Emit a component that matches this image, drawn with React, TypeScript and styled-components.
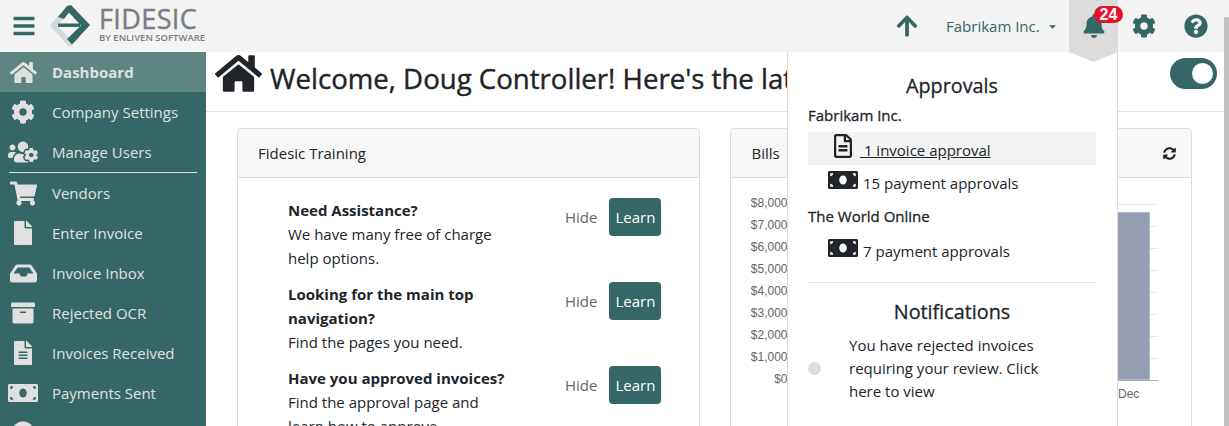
import React from 'react'
import styled, { createGlobalStyle } from 'styled-components'
import {
  FaArchive,
  FaArrowUp,
  FaBars,
  FaBell,
  FaCaretDown,
  FaCircle,
  FaCog,
  FaFile,
  FaFileAlt,
  FaHome,
  FaInbox,
  FaMoneyBill,
  FaQuestionCircle,
  FaRegFileAlt,
  FaShoppingCart,
  FaSyncAlt,
  FaUsersCog,
} from 'react-icons/fa'

const TEAL = '#356767'
const FONT = `'Open Sans', 'Noto Sans', sans-serif`

const navItems = [
  { label: 'Dashboard', icon: FaHome, size: 27, active: true },
  { label: 'Company Settings', icon: FaCog, size: 24 },
  { label: 'Manage Users', icon: FaUsersCog, size: 30, divider: true },
  { label: 'Vendors', icon: FaShoppingCart, size: 27 },
  { label: 'Enter Invoice', icon: FaFile, size: 24 },
  { label: 'Invoice Inbox', icon: FaInbox, size: 27 },
  { label: 'Rejected OCR', icon: FaArchive, size: 24 },
  { label: 'Invoices Received', icon: FaFileAlt, size: 24 },
  { label: 'Payments Sent', icon: FaMoneyBill, size: 30 },
  { label: '', icon: FaCircle, size: 24 },
]

const trainingItems = [
  {
    title: ['Need Assistance?'],
    body: ['We have many free of charge', 'help options.'],
  },
  {
    title: ['Looking for the main top', 'navigation?'],
    body: ['Find the pages you need.'],
  },
  {
    title: ['Have you approved invoices?'],
    body: ['Find the approval page and', 'learn how to approve.'],
  },
]

const yLabels = ['$8,000', '$7,000', '$6,000', '$5,000', '$4,000', '$3,000', '$2,000', '$1,000', '$0']

const Logo = () => (
  <LogoMark viewBox='49 3 43 44'>
    <polygon points='60,13 50,24.5 68,44.5 71,45 80,36 75,32 70,38 57,24.5 64,18' fill='#d5d8d8' />
    <polygon
      points='58,16 67,5 71,4 90,24 72,43.5 67,38 81,24.5 69,11.5 64,18'
      fill={TEAL}
    />
    <rect x='58' y='22.5' width='22' height='3.5' fill={TEAL} />
  </LogoMark>
)

const BillsChart = () => (
  <ChartSvg viewBox='0 0 460 250'>
    {yLabels.map((label, i) => (
      <g key={label}>
        <text x='56.5' y={29 + i * 22} textAnchor='end' fontSize='12' fill='#666'>
          {label}
        </text>
        <line
          x1='60'
          x2='427'
          y1={26.5 + i * 22}
          y2={26.5 + i * 22}
          stroke={i === 8 ? '#aaa' : '#e6e6e6'}
        />
      </g>
    ))}
    <rect x='350.5' y='34.5' width='68' height='167' fill='#949eb0' stroke='#b4bbc8' />
    <text x='387' y='220' fontSize='12' fill='#666'>
      Dec
    </text>
  </ChartSvg>
)

export default function App() {
  return (
    <>
      <GlobalStyles />
      <Page>
        <Header>
          <Burger>
            <FaBars size={24} />
          </Burger>
          <Logo />
          <Brand>
            <BrandName>FIDESIC</BrandName>
            <BrandSub>BY ENLIVEN SOFTWARE</BrandSub>
          </Brand>
          <HeaderRight>
            <UpArrow>
              <FaArrowUp size={24} />
            </UpArrow>
            <CompanyPicker>
              Fabrikam Inc.
              <FaCaretDown size={11} />
            </CompanyPicker>
            <BellTab>
              <FaBell size={24} />
              <Badge>24</Badge>
              <BellPointer />
              <Dropdown>
                <DropdownTitle>Approvals</DropdownTitle>
                <CompanyName>Fabrikam Inc.</CompanyName>
                <ApprovalLink>
                  <FaRegFileAlt size={24} />
                  <u>&nbsp;1 invoice approval</u>
                </ApprovalLink>
                <ApprovalRow>
                  <FaMoneyBill size={30} />
                  15 payment approvals
                </ApprovalRow>
                <CompanyName $spaced>The World Online</CompanyName>
                <ApprovalRow $spaced>
                  <FaMoneyBill size={30} />
                  7 payment approvals
                </ApprovalRow>
                <Rule />
                <DropdownTitle>Notifications</DropdownTitle>
                <Notice>
                  <NoticeDot />
                  <NoticeText>
                    You have rejected invoices
                    <br />
                    requiring your review. Click
                    <br />
                    here to view
                  </NoticeText>
                </Notice>
              </Dropdown>
            </BellTab>
            <HeaderIcon>
              <FaCog size={24} />
            </HeaderIcon>
            <HeaderIcon>
              <FaQuestionCircle size={24} />
            </HeaderIcon>
          </HeaderRight>
        </Header>
        <Body>
          <Sidebar>
            {navItems.map((item) => (
              <React.Fragment key={item.label}>
                <NavItem $active={item.active}>
                  <NavIcon>
                    <item.icon size={item.size} />
                  </NavIcon>
                  {item.label}
                </NavItem>
                {item.divider && <NavDivider />}
              </React.Fragment>
            ))}
          </Sidebar>
          <Main>
            <TitleBar>
              <Title>
                <FaHome size={47} />
                <h1>Welcome, Doug Controller! Here's the latest</h1>
              </Title>
              <Toggle />
            </TitleBar>
            <Cards>
              <Card>
                <CardHeader>Fidesic Training</CardHeader>
                <TrainingList>
                  {trainingItems.map((item) => (
                    <TrainingRow key={item.title[0]}>
                      <TrainingText>
                        {item.title.map((line) => (
                          <strong key={line}>{line}</strong>
                        ))}
                        {item.body.map((line) => (
                          <span key={line}>{line}</span>
                        ))}
                      </TrainingText>
                      <HideLink>Hide</HideLink>
                      <LearnButton>Learn</LearnButton>
                    </TrainingRow>
                  ))}
                </TrainingList>
              </Card>
              <Card>
                <CardHeader>
                  Bills
                  <FaSyncAlt size={13} color='#212529' />
                </CardHeader>
                <BillsChart />
              </Card>
            </Cards>
          </Main>
        </Body>
        <ScrollTrack>
          <ScrollThumb />
        </ScrollTrack>
      </Page>
    </>
  )
}

const GlobalStyles = createGlobalStyle`
  * {
    margin: 0;
    padding: 0;
    box-sizing: border-box;
  }
  body {
    font-family: ${FONT};
    font-size: 15px;
    line-height: 24px;
    color: #212529;
    background: #fff;
    overflow: hidden;
  }
`
const Page = styled.div`
  position: relative;
  display: flex;
  flex-direction: column;
  height: 100vh;
  overflow: hidden;
`
const Header = styled.header`
  display: flex;
  align-items: center;
  flex: 0 0 52px;
  background: #f3f3f3;
  color: ${TEAL};
`
const Burger = styled.div`
  display: flex;
  margin-left: 12px;
`
const LogoMark = styled.svg`
  width: 43px;
  height: 44px;
  margin-left: 13px;
`
const Brand = styled.div`
  display: flex;
  flex-direction: column;
  margin: -4px 0 0 7px;
  color: #7b7d80;
`
const BrandName = styled.div`
  font-size: 27px;
  line-height: 28px;
  letter-spacing: 0.4px;
  -webkit-text-stroke: 0.4px;
`
const BrandSub = styled.div`
  font-size: 9.5px;
  line-height: 10px;
  font-weight: 600;
  white-space: nowrap;
`
const HeaderRight = styled.div`
  display: flex;
  align-items: center;
  align-self: stretch;
  margin-left: auto;
  padding-right: 21px;
`
const UpArrow = styled.div`
  display: flex;
  margin-right: 27px;
`
const CompanyPicker = styled.div`
  display: flex;
  align-items: center;
  gap: 7px;
  width: 123px;
`
const BellTab = styled.div`
  position: relative;
  display: flex;
  align-items: center;
  justify-content: center;
  width: 49px;
  height: 52px;
  background: #dcdcdc;
  margin-right: 14px;
`
const BellPointer = styled.div`
  position: absolute;
  top: 52px;
  left: 0;
  width: 49px;
  height: 10px;
  background: #dcdcdc;
  clip-path: polygon(0 0, 100% 0, 50% 100%);
  z-index: 3;
`
const Badge = styled.span`
  position: absolute;
  top: 6px;
  left: 25px;
  width: 29px;
  height: 17px;
  border-radius: 9px;
  background: #e8112d;
  color: #fff;
  font-family: 'Liberation Sans', sans-serif;
  font-size: 16px;
  font-weight: 700;
  line-height: 17px;
  text-align: center;
`
const HeaderIcon = styled.div`
  display: flex;
  margin-right: 28px;
  &:last-child {
    margin-right: 0;
  }
`
const Dropdown = styled.div`
  position: absolute;
  top: 52px;
  right: 0;
  z-index: 2;
  width: 331px;
  height: 374px;
  padding: 20px 21px 0 20px;
  background: #fff;
  color: #212529;
  border: solid #dcdcdc;
  border-width: 0 1px;
`
const DropdownTitle = styled.div`
  font-size: 19.8px;
  line-height: 28px;
  text-align: center;
  -webkit-text-stroke: 0.3px;
`
const CompanyName = styled.div<{ $spaced?: boolean }>`
  line-height: 24px;
  margin-top: ${(p) => (p.$spaced ? '9px' : '3px')};
  -webkit-text-stroke: 0.3px;
`
const ApprovalLink = styled.div`
  display: flex;
  align-items: flex-end;
  height: 33px;
  margin-top: 5px;
  padding: 0 0 3px 23px;
  background: #f3f3f3;
  svg {
    margin-right: 5px;
    margin-bottom: 4px;
  }
`
const ApprovalRow = styled.div<{ $spaced?: boolean }>`
  display: flex;
  align-items: flex-end;
  height: 26px;
  margin-top: ${(p) => (p.$spaced ? '9px' : '4px')};
  padding-left: 20px;
  svg {
    margin-right: 5px;
  }
`
const Rule = styled.hr`
  border: 0;
  border-top: 1px solid #e2e2e2;
  margin: 19px 0 15px;
`
const Notice = styled.div`
  display: flex;
  align-items: center;
  margin-top: 8px;
`
const NoticeDot = styled.span`
  flex: none;
  width: 13px;
  height: 13px;
  border-radius: 50%;
  background: #dddde0;
`
const NoticeText = styled.div`
  margin-left: 28px;
  line-height: 23px;
  white-space: nowrap;
`
const Body = styled.div`
  display: flex;
  flex: 1;
  min-height: 0;
`
const Sidebar = styled.nav`
  flex: 0 0 206px;
  background: ${TEAL};
  color: #e0e0e0;
`
const NavItem = styled.div<{ $active?: boolean }>`
  display: flex;
  align-items: center;
  height: 40px;
  padding-left: 8px;
  background: ${(p) => (p.$active ? '#5c8582' : 'transparent')};
  font-weight: ${(p) => (p.$active ? 700 : 400)};
`
const NavIcon = styled.span`
  display: flex;
  justify-content: center;
  flex: 0 0 30px;
  margin-right: 14px;
`
const NavDivider = styled.div`
  height: 1px;
  margin: 0 9px;
  background: #e0e0e0;
`
const Main = styled.main`
  flex: 1;
  min-width: 0;
`
const TitleBar = styled.div`
  display: flex;
  justify-content: space-between;
  height: 60px;
  padding: 0 12px 0 9px;
  border-bottom: 1px solid #e2e2e2;
`
const Title = styled.div`
  display: flex;
  align-items: flex-start;
  gap: 8px;
  svg {
    margin-top: -2px;
  }
  h1 {
    margin-top: 3px;
    font-size: 27.6px;
    font-weight: 400;
    line-height: 46px;
    white-space: nowrap;
    -webkit-text-stroke: 0.4px;
  }
`
const Toggle = styled.div`
  position: relative;
  width: 47px;
  height: 31px;
  margin-top: 6px;
  border-radius: 16px;
  background: ${TEAL};
  &::after {
    content: '';
    position: absolute;
    top: 5px;
    right: 4px;
    width: 21px;
    height: 21px;
    border-radius: 50%;
    background: #fff;
  }
`
const Cards = styled.div`
  display: grid;
  grid-template-columns: 1fr 1fr;
  gap: 30px;
  padding: 16px 37px 0 31px;
`
const Card = styled.section`
  height: 400px;
  border: 1px solid #dcdcdc;
  border-radius: 4px;
`
const CardHeader = styled.div`
  display: flex;
  align-items: center;
  justify-content: space-between;
  height: 49px;
  padding: 0 15px 0 20px;
  background: #f7f7f7;
  border-bottom: 1px solid #dcdcdc;
  border-radius: 4px 4px 0 0;
`
const TrainingList = styled.div`
  display: flex;
  flex-direction: column;
  gap: 12px;
  padding: 20px 38px 0 50px;
`
const TrainingRow = styled.div`
  display: flex;
  align-items: flex-start;
`
const TrainingText = styled.div`
  display: flex;
  flex-direction: column;
  width: 277px;
  strong {
    font-weight: 700;
  }
`
const HideLink = styled.span`
  line-height: 38px;
  color: #5c6b6b;
  margin-left: auto;
`
const LearnButton = styled.button`
  width: 52px;
  height: 38px;
  margin-left: 12px;
  border: 0;
  border-radius: 4px;
  background: ${TEAL};
  color: #fff;
  font: inherit;
`
const ChartSvg = styled.svg`
  display: block;
  width: 460px;
  height: 250px;
  font-family: 'Liberation Sans', sans-serif;
`
const ScrollTrack = styled.div`
  position: absolute;
  top: 0;
  right: 0;
  bottom: 0;
  z-index: 4;
  width: 5px;
  padding-top: 17px;
  background: #f1f1f1;
`
const ScrollThumb = styled.div`
  height: 100%;
  background: #c1c1c1;
`
